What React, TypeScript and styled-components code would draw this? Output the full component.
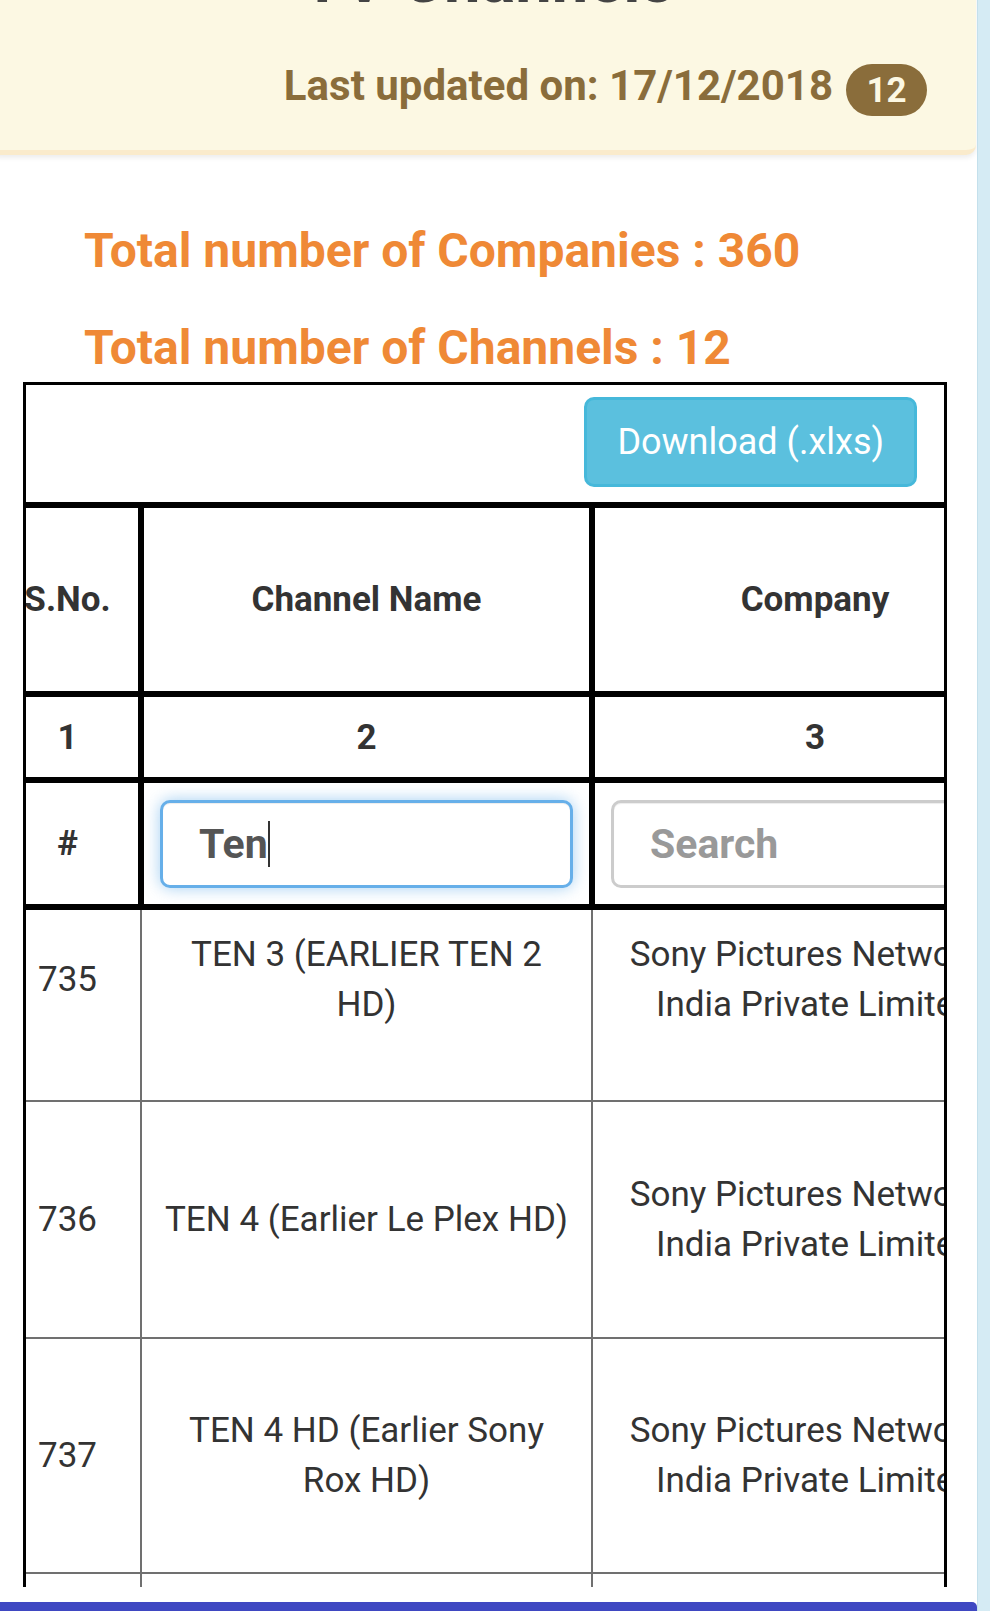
import React from 'react';
import styled, { createGlobalStyle } from 'styled-components';

// --- GLOBAL STYLES ---
const GlobalStyle = createGlobalStyle`
  * { box-sizing: border-box; }
  html, body { margin: 0; padding: 0; background: #fff; }
  body { font-family: Roboto, 'Liberation Sans', Arial, sans-serif; color: #333; -webkit-font-smoothing: antialiased; }
`;

// --- LAYOUT ---
const Page = styled.div`
  display: flex; width: 990px; height: 1611px; overflow: hidden; background: #fff;
`;

const Main = styled.div`
  flex: 1; min-width: 0; display: flex; flex-direction: column;
`;

const Viewport = styled.div`
  height: 1587px; overflow: hidden;
`;

const BottomBar = styled.div`
  margin-top: auto; height: 9px; background: #3f48c2; border-radius: 0 5px 0 0;
`;

const SideStrip = styled.div`
  width: 13px; background: #d5ebf4; border-left: 1px solid #c4e0ec;
`;

// --- ALERT HEADER ---
const Alert = styled.section`
  margin: 0 1px 0 -12px; padding: 0 49px 34px 12px;
  background: #fcf8e3; border-bottom: 5px solid #faebcc; border-radius: 0 0 10px 10px;
  box-shadow: 0 3px 5px rgba(0, 0, 0, 0.07);
`;

const Title = styled.h2`
  margin: -55px -49px 0 0; font-size: 65px; line-height: 71px; font-weight: 700;
  color: #444; text-align: center;
`;

const UpdatedRow = styled.div`
  display: flex; justify-content: flex-end; align-items: center; gap: 13px;
  margin-top: 48px; height: 52px;
`;

const Updated = styled.span`
  font-size: 42px; line-height: 44px; font-weight: 700; color: #8a6d3b; margin-bottom: 8px;
`;

const Badge = styled.span`
  display: inline-flex; align-items: center; justify-content: center;
  min-width: 81px; height: 52px; padding: 0 18px; border-radius: 26px;
  background: #8a6d3b; color: #fcf8e3; font-size: 35px; font-weight: 700;
`;

// --- TOTALS ---
const Totals = styled.div`
  padding: 67px 0 0 84px;
`;

const TotalLine = styled.h3`
  margin: 0; font-size: 48px; line-height: 57px; font-weight: 700; color: #ef8936;
  & + & { margin-top: 40px; }
`;

// --- TABLE FRAME ---
const Frame = styled.div`
  margin: 6px 30px 0 23px; border: 3px solid #000; border-bottom: 0;
`;

const Toolbar = styled.div`
  display: flex; justify-content: flex-end; padding: 12px 27px 15px; border-bottom: 6px solid #000;
`;

const DownloadButton = styled.button`
  height: 90px; padding: 0 30px; border: 3px solid #46b8da; border-radius: 10px;
  background: #5bc0de; color: #fff; font-family: Roboto, sans-serif; font-size: 36px; font-weight: 400;
`;

const TableClip = styled.div`
  overflow: hidden;
`;

const Grid = styled.table`
  margin-left: -35px; width: 1044px; border-collapse: collapse; table-layout: fixed;
`;

const Col = styled.col<{ $w: number }>`
  width: ${p => p.$w}px;
`;

const HeadCell = styled.th<{ $h: number }>`
  height: ${p => p.$h}px; padding: 0 16px;
  border: 6px solid #000; border-top: 0;
  font-size: 35px; font-weight: 700; color: #333; text-align: center; vertical-align: middle;
  white-space: nowrap;
`;

const InputWrap = styled.div`
  position: relative;
`;

const Field = styled.input<{ $focused?: boolean }>`
  display: block; width: 100%; height: 88px; padding: 0 36px;
  border: 3px solid ${p => (p.$focused ? '#66afe9' : '#ccc')}; border-radius: 10px; outline: none;
  background: #fff; color: #555; font-family: Roboto, sans-serif; font-size: 41px; font-weight: 700;
  box-shadow: ${p => (p.$focused
    ? 'inset 0 1px 1px rgba(0,0,0,.075), 0 0 16px rgba(102,175,233,.6)'
    : 'inset 0 1px 1px rgba(0,0,0,.075)')};
  &::placeholder { color: #999; }
`;

const Caret = styled.span`
  position: absolute; left: 108px; top: 21px; width: 2px; height: 46px; background: #333;
`;

const Cell = styled.td<{ $h: number; $pb?: number }>`
  height: ${p => p.$h}px; padding: 20px 16px ${p => p.$pb ?? 20}px;
  border: 2px solid #707070;
  font-size: 35px; line-height: 50px; color: #333; text-align: center; vertical-align: middle;
  white-space: nowrap;
`;

const channels = [
  { no: '735', name: ['TEN 3 (EARLIER TEN 2', 'HD)'], h: 189, pb: 70 },
  { no: '736', name: ['TEN 4 (Earlier Le Plex HD)'], h: 237 },
  { no: '737', name: ['TEN 4 HD (Earlier Sony', 'Rox HD)'], h: 235 },
];

const company = ['Sony Pictures Networks', 'India Private Limited'];

const Lines = ({ lines }: { lines: string[] }) => (
  <>
    {lines.map((l, i) => (
      <React.Fragment key={i}>
        {i > 0 && <br />}
        {l}
      </React.Fragment>
    ))}
  </>
);

function App() {
  return (
    <>
      <GlobalStyle />
      <Page>
        <Main>
          <Viewport>
            <Alert>
              <Title>TV Channels</Title>
              <UpdatedRow>
                <Updated>Last updated on: 17/12/2018</Updated>
                <Badge>12</Badge>
              </UpdatedRow>
            </Alert>

            <Totals>
              <TotalLine>Total number of Companies : 360</TotalLine>
              <TotalLine>Total number of Channels : 12</TotalLine>
            </Totals>

            <Frame>
              <Toolbar>
                <DownloadButton>Download (.xlxs)</DownloadButton>
              </Toolbar>
              <TableClip>
                <Grid>
                  <colgroup>
                    <Col $w={147} />
                    <Col $w={451} />
                    <Col $w={446} />
                  </colgroup>
                  <thead>
                    <tr>
                      <HeadCell $h={186}>S.No.</HeadCell>
                      <HeadCell $h={186}>Channel Name</HeadCell>
                      <HeadCell $h={186}>Company</HeadCell>
                    </tr>
                    <tr>
                      <HeadCell $h={86}>1</HeadCell>
                      <HeadCell $h={86}>2</HeadCell>
                      <HeadCell $h={86}>3</HeadCell>
                    </tr>
                    <tr>
                      <HeadCell $h={127}>#</HeadCell>
                      <HeadCell $h={127}>
                        <InputWrap>
                          <Field $focused defaultValue="Ten" readOnly />
                          <Caret />
                        </InputWrap>
                      </HeadCell>
                      <HeadCell $h={127}>
                        <Field placeholder="Search" readOnly />
                      </HeadCell>
                    </tr>
                  </thead>
                  <tbody>
                    {channels.map(c => (
                      <tr key={c.no}>
                        <Cell $h={c.h} $pb={c.pb}>{c.no}</Cell>
                        <Cell $h={c.h} $pb={c.pb}><Lines lines={c.name} /></Cell>
                        <Cell $h={c.h} $pb={c.pb}><Lines lines={company} /></Cell>
                      </tr>
                    ))}
                    <tr>
                      <Cell $h={200} />
                      <Cell $h={200} />
                      <Cell $h={200} />
                    </tr>
                  </tbody>
                </Grid>
              </TableClip>
            </Frame>
          </Viewport>
          <BottomBar />
        </Main>
        <SideStrip />
      </Page>
    </>
  );
}

export default App;
